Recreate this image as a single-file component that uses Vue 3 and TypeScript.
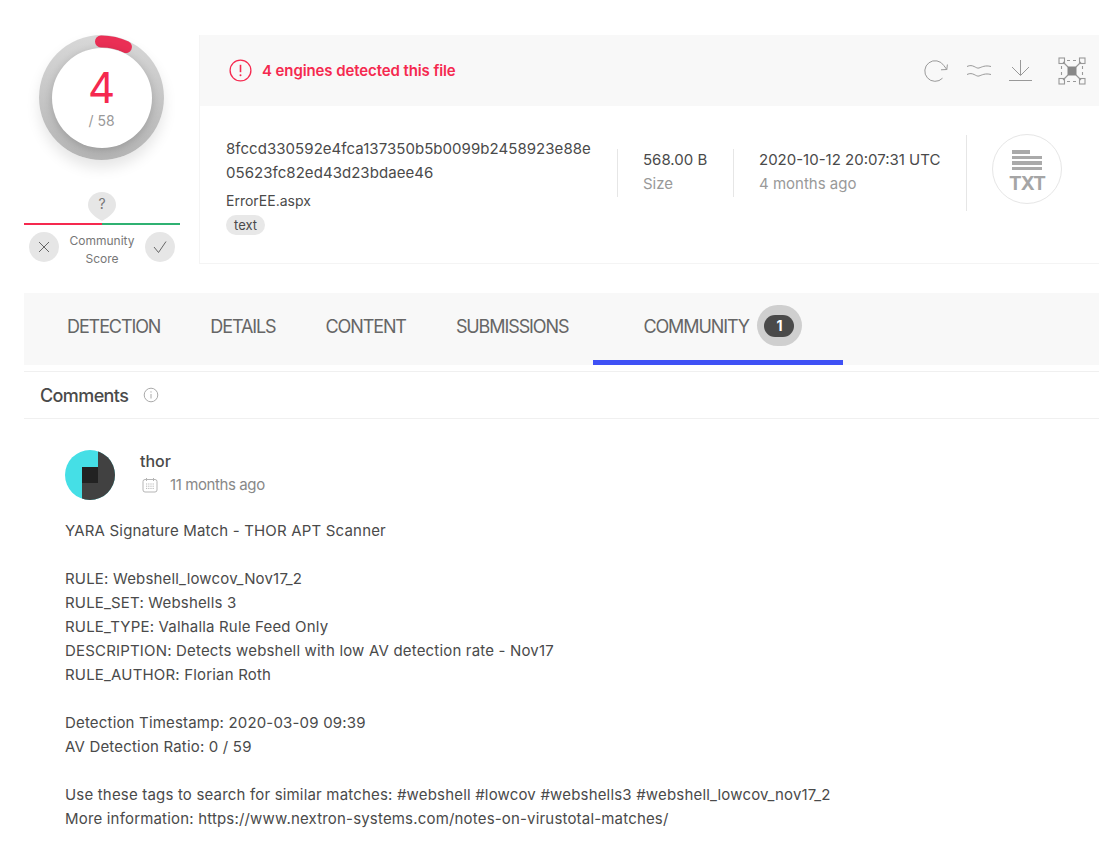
<script setup lang="ts">
const tabs = [
  { label: 'DETECTION', cls: 't1' },
  { label: 'DETAILS', cls: 't2' },
  { label: 'CONTENT', cls: 't3' },
  { label: 'SUBMISSIONS', cls: 't4' },
]
const lines = [
  'YARA Signature Match - THOR APT Scanner',
  '',
  'RULE: Webshell_lowcov_Nov17_2',
  'RULE_SET: Webshells 3',
  'RULE_TYPE: Valhalla Rule Feed Only',
  'DESCRIPTION: Detects webshell with low AV detection rate - Nov17',
  'RULE_AUTHOR: Florian Roth',
  '',
  'Detection Timestamp: 2020-03-09 09:39',
  'AV Detection Ratio: 0 / 59',
  '',
  'Use these tags to search for similar matches: #webshell #lowcov #webshells3 #webshell_lowcov_nov17_2',
  'More information: https://www.nextron-systems.com/notes-on-virustotal-matches/',
]
</script>

<template>
  <div class="page">
    <section class="top">
      <aside class="score">
        <div class="ring">
          <svg class="arc" width="126" height="126" viewBox="0 0 126 126">
            <path d="M62 6.5 A56.5 56.5 0 0 1 87 12" fill="none" stroke="#ea2f55" stroke-width="12" stroke-linecap="round" />
          </svg>
          <div class="disc">
            <span class="num">4</span>
            <span class="den">/ 58</span>
          </div>
        </div>
        <div class="community">
          <div class="pin">
            <svg class="pin-shape" width="28" height="29" viewBox="0 0 28 29"><path d="M14 0C6 0 0 5.600 0 13c0 7 7.500 12.500 14 16C20.500 25.500 28 20 28 13 28 5.600 22 0 14 0z" fill="#e6e6e6" /></svg>
            <span>?</span>
          </div>
          <div class="bar"><i class="bad"></i><i class="good"></i></div>
          <div class="votes">
            <span class="vote">
              <svg width="14" height="14" viewBox="0 0 14 14"><path d="M2 2l10 10M12 2L2 12" fill="none" stroke="#666" stroke-width="1" /></svg>
            </span>
            <span class="label">Community<br />Score</span>
            <span class="vote">
              <svg width="16" height="14" viewBox="0 0 16 14"><path d="M2 7l4.500 5.500L14 1.500" fill="none" stroke="#666" stroke-width="1" /></svg>
            </span>
          </div>
        </div>
      </aside>

      <div class="card">
        <header class="head">
          <svg class="alert" width="23" height="23" viewBox="0 0 23 23">
            <circle cx="11.5" cy="11.5" r="10.4" fill="none" stroke="#f5294f" stroke-width="1.3" />
            <path d="M11.5 5.8v7.4" stroke="#f5294f" stroke-width="1.6" />
            <circle cx="11.5" cy="16.2" r="1" fill="#f5294f" />
          </svg>
          <span class="detected">4 engines detected this file</span>
          <div class="actions">
            <svg width="24" height="22" viewBox="0 0 24 22"><path d="M18.500 18.200A10.300 10.300 0 1 1 19.800 5.500L22.800 9.500M22.800 9.500l-5.800.3M22.800 9.500l.6-5" fill="none" stroke="#999" stroke-width="1" /></svg>
            <svg width="24" height="16" viewBox="0 0 24 16"><path d="M0 3.500c6-3 9 2.500 12 1.500s6-3 12-1.500M0 11.500c6-3 9 2.500 12 1.500s6-3 12-1.500" fill="none" stroke="#999" stroke-width="1" /></svg>
            <svg width="23" height="21" viewBox="0 0 23 21"><path d="M11.500 0v15M3 7l8.500 8.500L20 7M0 20.500h23" fill="none" stroke="#999" stroke-width="1" /></svg>
            <svg class="graph" width="28" height="28" viewBox="0 0 28 28">
              <g fill="none" stroke="#999" stroke-width="1.1">
                <rect x="1" y="1" width="5.500" height="5.500" />
                <rect x="21.500" y="1" width="5.500" height="5.500" />
                <rect x="1" y="21.500" width="5.500" height="5.500" />
                <rect x="21.500" y="21.500" width="5.500" height="5.500" />
                <path d="M9 3.500h10M9 24.500h10M3.500 9v10M24.500 9v10" stroke-dasharray="3 3" />
                <path d="M5 5l5 5M23 5l-5 5M5 23l5-5M23 23l-5-5" />
              </g>
              <rect x="9.500" y="9.500" width="9" height="9" fill="#888" />
            </svg>
          </div>
        </header>
        <div class="info">
          <div class="file">
            <div class="hash">8fccd330592e4fca137350b5b0099b2458923e88e<br />05623fc82ed43d23bdaee46</div>
            <div class="name">ErrorEE.aspx</div>
            <span class="tag">text</span>
          </div>
          <div class="stat size">
            <span class="value">568.00 B</span>
            <span class="key">Size</span>
          </div>
          <div class="stat date">
            <span class="value">2020-10-12 20:07:31 UTC</span>
            <span class="key">4 months ago</span>
          </div>
          <div class="type-wrap">
            <div class="type">
              <div class="doc"><i class="short"></i><i></i><i></i><i></i></div>
              <span class="ext">TXT</span>
            </div>
          </div>
        </div>
      </div>
    </section>

    <nav class="tabs">
      <a v-for="tab in tabs" :key="tab.label" class="tab" :class="tab.cls">{{ tab.label }}</a>
      <a class="tab active">
        <span>COMMUNITY</span>
        <span class="count"><b>1</b></span>
      </a>
    </nav>

    <div class="comments-head">
      <h2>Comments</h2>
      <svg width="16" height="16" viewBox="0 0 16 16">
        <circle cx="8" cy="8" r="6.8" fill="none" stroke="#aaa" stroke-width="1" />
        <path d="M8 7v4.500" stroke="#aaa" stroke-width="1" />
        <circle cx="8" cy="4.900" r=".7" fill="#aaa" />
      </svg>
    </div>

    <article class="comment">
      <div class="author">
        <svg class="avatar" width="50" height="50" viewBox="0 0 50 50">
          <defs><clipPath id="av"><circle cx="25" cy="25" r="25" /></clipPath></defs>
          <g clip-path="url(#av)">
            <rect width="50" height="50" fill="#45dfe6" />
            <path d="M33 0h17v50H17V17h16z" fill="#414141" />
            <rect x="17" y="17" width="16" height="16" fill="#222" />
          </g>
        </svg>
        <div class="who">
          <div class="user">thor</div>
          <div class="when">
            <svg width="16" height="16" viewBox="0 0 16 16">
              <rect x="1" y="2.500" width="14" height="12.500" rx="2" fill="none" stroke="#b5b5b5" />
              <path d="M4.500 1v3M11.500 1v3" stroke="#b5b5b5" />
              <path d="M4 7h8M4 9.200h8M4 11.400h8" stroke="#b5b5b5" stroke-dasharray="1.2 1" />
            </svg>
            <span>11 months ago</span>
          </div>
        </div>
      </div>
      <div class="body">
        <div v-for="(line, i) in lines" :key="i" class="line">{{ line }}</div>
      </div>
    </article>
  </div>
</template>

<style>
html, body { margin: 0; background: #fff; }
</style>

<style scoped>
.page {
  width: 1118px;
  height: 850px;
  overflow: hidden;
  box-sizing: border-box;
  padding: 35px 19px 0 24px;
  font-family: Inter, "Open Sans", "Liberation Sans", sans-serif;
  color: #4a4a4a;
}
.top { display: flex; align-items: flex-start; height: 229px; }
.score { width: 156px; flex: none; display: flex; flex-direction: column; align-items: center; }
.ring {
  position: relative;
  width: 125px;
  height: 125px;
  margin-right: 1px;
  border-radius: 50%;
  background: linear-gradient(180deg, #d8d8d8, #b4b4b4);
  box-shadow: 0 8px 14px rgba(0, 0, 0, .1);
  display: flex;
  align-items: center;
  justify-content: center;
}
.arc { position: absolute; inset: 0; }
.disc {
  position: relative;
  width: 100px;
  height: 100px;
  border-radius: 50%;
  background: #fff;
  box-shadow: 0 2px 8px rgba(0, 0, 0, .18);
  display: flex;
  flex-direction: column;
  align-items: center;
}
.num { font-size: 42px; line-height: 44px; margin-top: 18px; color: #f5294f; font-weight: 400; }
.den { font-size: 14px; line-height: 18px; color: #999; margin-top: 2px; }
.community { margin-top: 32px; width: 156px; display: flex; flex-direction: column; align-items: center; }
.pin {
  width: 28px;
  height: 29px;
  position: relative;
  display: flex;
  justify-content: center;
  color: #777;
  font-size: 14px;
  line-height: 24px;
}
.pin-shape { position: absolute; inset: 0; }
.pin span { position: relative; }
.bar { display: flex; width: 156px; height: 2px; margin-top: 2px; }
.bar i { flex: 1; }
.bad { background: #f5294f; }
.good { background: #2fb172; }
.votes { width: 156px; display: flex; align-items: flex-start; justify-content: space-between; padding: 7px 5px 0; box-sizing: border-box; }
.vote { width: 30px; height: 30px; border-radius: 50%; background: #e6e6e6; display: flex; align-items: center; justify-content: center; }
.label { font-size: 12px; line-height: 18px; text-align: center; color: #777; }

.card { margin-left: 19px; flex: 1; height: 229px; border: 1px solid #f4f4f4; border-width: 0 0 1px 1px; box-sizing: border-box; }
.head { height: 71px; background: #f8f8f8; display: flex; align-items: center; padding: 0 13px 0 29px; }
.detected { margin-left: 10px; font-size: 15px; font-weight: 600; color: #f5294f; letter-spacing: -.1px; }
.actions { margin-left: auto; display: flex; align-items: center; }
.actions svg:nth-child(2) { margin-left: 19px; }
.actions svg:nth-child(3) { margin-left: 18px; }
.actions svg:nth-child(4) { margin-left: 26px; }
.info { display: flex; align-items: flex-start; padding: 31px 0 0 26px; }
.file { width: 391px; letter-spacing: .05px; }
.hash { font-size: 15px; line-height: 24px; }
.name { font-size: 14px; line-height: 20px; margin-top: 6px; letter-spacing: 0; }
.tag { display: inline-block; margin-top: 4px; padding: 0 8px; height: 20px; line-height: 20px; border-radius: 10px; background: #e8e8e8; font-size: 13px; letter-spacing: 0; }
.stat { display: flex; flex-direction: column; height: 48px; margin-top: 12px; border-left: 1px solid #e6e6e6; padding-left: 25px; }
.stat .value { font-size: 15px; line-height: 22px; margin-top: 0; }
.stat .key { font-size: 15px; line-height: 26px; color: #999; }
.size { width: 90px; }
.date { width: 207px; }
.type-wrap { height: 76px; margin-top: -2px; border-left: 1px solid #e6e6e6; padding-left: 25px; }
.type { width: 68px; height: 68px; margin-top: -1px; border: 1px solid #e6e6e6; border-radius: 50%; display: flex; flex-direction: column; align-items: center; }
.doc { margin-top: 15px; width: 30px; display: flex; flex-direction: column; gap: 2px; }
.doc i { display: block; height: 3.6px; background: #aaa; }
.doc .short { width: 18px; }
.ext { font-size: 19px; font-weight: 700; color: #a5a5a5; line-height: 20px; letter-spacing: -.9px; margin-top: 4px; }

.tabs { margin-top: 29px; height: 72px; background: #f8f8f8; display: flex; align-items: stretch; }
.tab { display: flex; align-items: center; justify-content: center; font-size: 18px; color: #666; padding-bottom: 6px; box-sizing: border-box; letter-spacing: -1.1px; }
.t1 { margin-left: 43px; }
.t2 { margin-left: 50px; }
.t3 { margin-left: 50px; }
.t4 { margin-left: 50px; }
.active { margin-left: 25px; width: 250px; border-bottom: 5px solid #3f51f5; padding: 0 0 1px 50px; gap: 8px; justify-content: flex-start; }
.count { width: 45px; height: 41px; border-radius: 21px; background: #cfcfcf; display: flex; align-items: center; justify-content: center; margin-top: -1px; }
.count b { width: 30px; height: 22px; border-radius: 11px; background: #4a4a4a; color: #fff; font-size: 14px; text-align: center; line-height: 22px; letter-spacing: 0; }

.comments-head { margin-top: 6px; height: 48px; border-top: 1px solid #f0f0f0; border-bottom: 1px solid #f0f0f0; box-sizing: border-box; display: flex; align-items: center; padding-left: 16px; gap: 15px; }
.comments-head h2 { margin: 0; font-size: 18px; font-weight: 500; color: #4a4a4a; letter-spacing: -.6px; }
.comment { padding: 31px 0 0 41px; }
.author { display: flex; }
.avatar { flex: none; }
.who { margin-left: 25px; }
.user { font-size: 16px; font-weight: 500; line-height: 24px; margin-top: -1px; }
.when { display: flex; align-items: center; gap: 12px; font-size: 15px; color: #888; line-height: 22px; margin: 1px 0 0 2px; letter-spacing: -.4px; }
.body { margin-top: 19px; font-size: 15px; line-height: 24px; color: #4a4a4a; letter-spacing: .18px; }
.line { height: 24px; white-space: nowrap; }
</style>
